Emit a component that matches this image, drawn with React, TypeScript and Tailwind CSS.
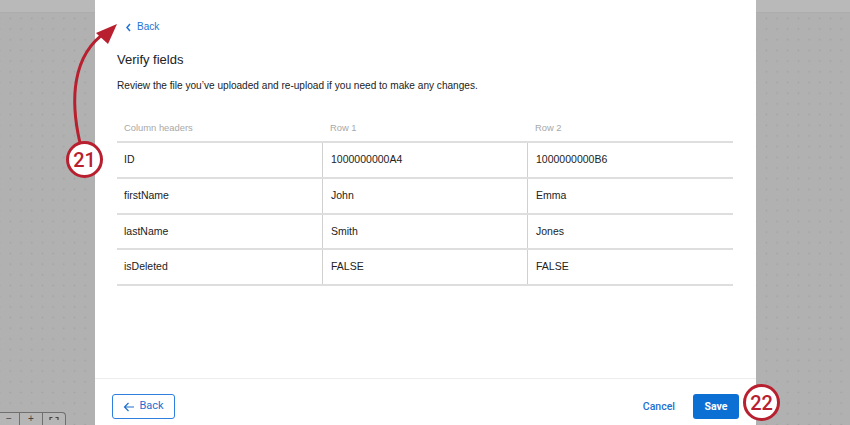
import React from "react";

const rows = [
  ["ID", "1000000000A4", "1000000000B6"],
  ["firstName", "John", "Emma"],
  ["lastName", "Smith", "Jones"],
  ["isDeleted", "FALSE", "FALSE"],
];

function GrayPanel({ w }: { w: string }) {
  return (
    <div className={`${w} h-full flex flex-col bg-[#b1b1b1]`}>
      <div className="h-[13px] bg-[#b9b9b9] border-b border-[#adadad]" />
      <div className="flex-1 bg-[radial-gradient(circle,#a2a2a2_0.7px,transparent_1.1px)] bg-[size:10.7px_10.7px] bg-[position:5px_0px]" />
    </div>
  );
}

function Badge({ n }: { n: string }) {
  return (
    <div className="w-[37px] h-[37px] rounded-full bg-white border-[3px] border-[#b8202f] flex items-center justify-center text-[#b8202f] text-[20px] font-medium font-[Roboto,sans-serif] leading-none">
      {n}
    </div>
  );
}

export default function App() {
  return (
    <div className="relative w-[850px] h-[425px] overflow-hidden flex font-['Liberation_Sans',Arial,sans-serif]">
      <div className="w-[95px] h-full shrink-0">
        <GrayPanel w="w-[95px]" />
      </div>
      <div className="w-[661px] shrink-0 h-full bg-white flex flex-col">
        <div className="flex-1 pl-[22px] pr-[23px] pt-[20px]">
          <div className="flex items-center gap-[5px] pl-[8px] text-[#1e73d6] text-[10px] leading-[14px]">
            <svg width="7" height="9" viewBox="0 0 7 9" fill="none">
              <path d="M5 1 L2 4.5 L5 8" stroke="#1e73d6" strokeWidth="1.5" />
            </svg>
            <span>Back</span>
          </div>
          <div className="mt-[17px] text-[13px] leading-[18px] text-[#222]">Verify fields</div>
          <div className="mt-[10px] text-[10.1px] leading-[14px] text-[#222]">
            Review the file you’ve uploaded and re-upload if you need to make any changes.
          </div>
          <div className="mt-[28px] text-[10.5px]">
            <div className="grid grid-cols-[205px_205px_1fr] border-b-2 border-[#dedede] pb-[6px] text-[#a8a8a8] text-[9.4px] leading-[14px]">
              <div className="pl-[7px]">Column headers</div>
              <div className="pl-[8px]">Row 1</div>
              <div className="pl-[8px]">Row 2</div>
            </div>
            {rows.map((r) => (
              <div key={r[0]} className="grid grid-cols-[205px_205px_1fr] h-[35.8px] border-b-2 border-[#dedede] text-[#222]">
                <div className="pl-[7px] flex items-center">{r[0]}</div>
                <div className="pl-[8px] flex items-center border-l border-[#d0d0d0]">{r[1]}</div>
                <div className="pl-[8px] flex items-center border-l border-[#d0d0d0]">{r[2]}</div>
              </div>
            ))}
          </div>
        </div>
        <div className="h-[47px] border-t border-[#ececec] flex items-start pt-[15px] pl-[17px] pr-[17px] font-[Roboto,sans-serif]">
          <div className="h-[25px] w-[63px] border border-[#2f7fe0] rounded-[3px] flex items-center justify-center gap-[4px] text-[#1e6fd0] text-[11px]">
            <svg width="12" height="10" viewBox="0 0 12 10" fill="none">
              <path d="M11 5 H1.5 M5.5 1 L1.5 5 L5.5 9" stroke="#1e6fd0" strokeWidth="1.2" />
            </svg>
            <span>Back</span>
          </div>
          <div className="flex-1" />
          <div className="h-[25px] flex items-center text-[#1e6fd0] text-[10.5px] font-medium mr-[18px]">Cancel</div>
          <div className="h-[25px] w-[46px] bg-[#0b6fd3] rounded-[3px] flex items-center justify-center text-white text-[10.5px] font-bold">
            Save
          </div>
        </div>
      </div>
      <div className="flex-1 h-full">
        <GrayPanel w="w-full" />
      </div>

      {/* zoom controls */}
      <div className="absolute left-[-2px] top-[412px] w-[68px] h-[13px] flex bg-[#b6b6b6] border-t border-r border-l border-[#6f6f6f] rounded-tr-[4px] text-[#444] text-[10px] leading-[12px]">
        <div className="w-[21px] flex justify-center border-r border-[#6f6f6f]">−</div>
        <div className="w-[23px] flex justify-center border-r border-[#6f6f6f]">+</div>
        <div className="flex-1 flex justify-center pt-[3px]">
          <svg width="10" height="8" viewBox="0 0 10 8" fill="none">
            <path d="M1 4 V1.5 H3.5 M6.5 1.5 H9 V4" stroke="#444" strokeWidth="1.2" />
          </svg>
        </div>
      </div>

      {/* annotation 21 arrow */}
      <svg className="absolute left-0 top-0" width="200" height="200" viewBox="0 0 200 200" fill="none">
        <path d="M80 143 C 70 100, 72 55, 106 32" stroke="#b8202f" strokeWidth="3" fill="none" />
        <polygon points="117,24 96,33 108,44" fill="#b8202f" />
      </svg>
      <div className="absolute left-[66px] top-[141px]">
        <Badge n="21" />
      </div>
      <div className="absolute left-[743px] top-[384px]">
        <Badge n="22" />
      </div>
    </div>
  );
}
